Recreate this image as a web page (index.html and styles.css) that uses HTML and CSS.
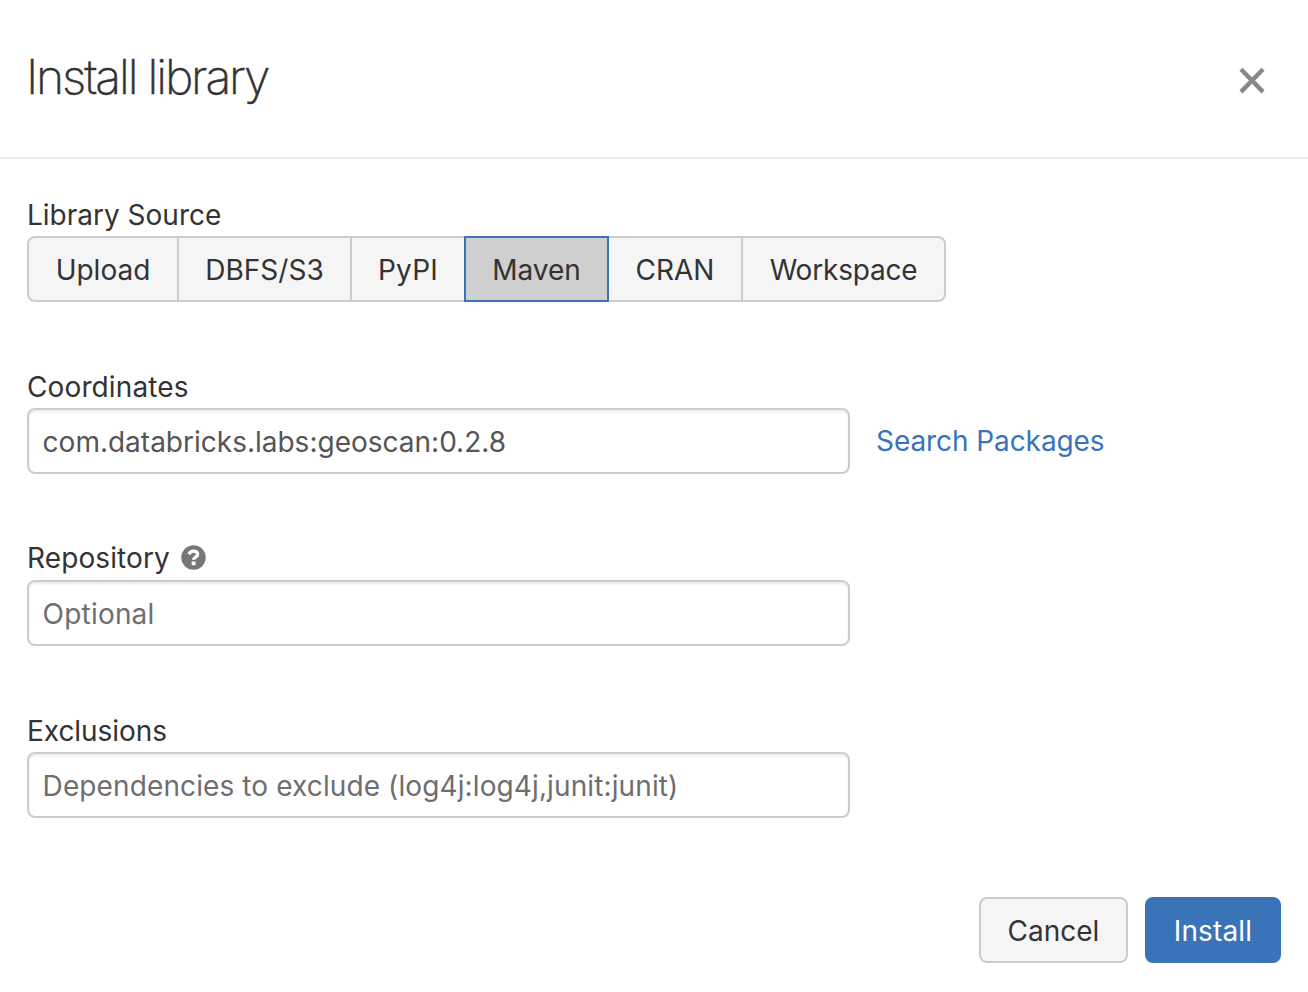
FILE: index.html
```html
<!DOCTYPE html>
<html lang="en">
<head>
<meta charset="utf-8">
<title>Install library</title>
<link rel="stylesheet" href="styles.css">
</head>
<body>
<main class="dialog">
  <header class="dialog-header">
    <h1 class="title">Install library</h1>
    <button class="close" aria-label="Close"><svg width="26" height="28" viewBox="0 0 26 28"><path d="M2 2.3 24 24.9M24 2.3 2 24.9" fill="none" stroke="#888" stroke-width="4.4"/></svg></button>
  </header>
  <section class="form">
    <div class="field">
      <div class="label source">Library Source</div>
      <div class="group">
        <button class="tab upload"><span>Upload</span></button>
        <button class="tab dbfs"><span>DBFS/S3</span></button>
        <button class="tab pypi"><span>PyPI</span></button>
        <button class="tab maven active"><span>Maven</span></button>
        <button class="tab cran"><span>CRAN</span></button>
        <button class="tab workspace"><span>Workspace</span></button>
      </div>
    </div>
    <div class="field">
      <div class="label coordinates">Coordinates</div>
      <div class="row">
        <div class="input value"><span>com.databricks.labs:geoscan:0.2.8</span></div>
        <a class="link">Search Packages</a>
      </div>
    </div>
    <div class="field">
      <div class="label repository">Repository
        <svg class="help" width="25" height="25" viewBox="0 0 25 25"><circle cx="12.5" cy="12.5" r="12.2" fill="#777"/><path d="M7.9 9.3C8.9 7.2 10.3 6.2 12.4 6.2c2.5 0 4.2 1.3 4.2 3.2 0 2.8-3.9 2.6-4 5.4" fill="none" stroke="#fff" stroke-width="3.3"/><path d="M10.7 16.5h3.8V20.2h-3.8z" fill="#fff"/></svg>
      </div>
      <div class="input optional"><span>Optional</span></div>
    </div>
    <div class="field">
      <div class="label exclusions">Exclusions</div>
      <div class="input exclude"><span>Dependencies to exclude (log4j:log4j,junit:junit)</span></div>
    </div>
  </section>
  <footer class="actions">
    <button class="btn cancel">Cancel</button>
    <button class="btn install">Install</button>
  </footer>
</main>
</body>
</html>
```
FILE: styles.css
```css
* { box-sizing: border-box; }
body { margin: 0; background: #fff; color: #333; font: 28px/34px Inter, "Liberation Sans", sans-serif; letter-spacing: 0; }
button { font: inherit; letter-spacing: inherit; color: inherit; padding: 2px 0 0; margin: 0; }
.dialog { width: 1308px; height: 992px; overflow: hidden; }
.dialog-header { height: 159px; border-bottom: 2px solid #eee; display: flex; justify-content: space-between; padding: 46px 43px 0 26px; }
.title { margin: 0; font-size: 48px; line-height: 62px; font-weight: 200; letter-spacing: -2.15px; -webkit-text-stroke: 0.5px #333; }
.close { width: 26px; height: 28px; border: 0; background: none; margin-top: 21px; padding: 0; }
.close svg { display: block; }
.form { padding: 39px 27px 0; display: flex; flex-direction: column; }
.field { height: 172px; }
.label { height: 38px; line-height: 34px; display: flex; align-items: flex-start; }
.coordinates { letter-spacing: 0.12px; }
.repository { line-height: 32px; letter-spacing: 0.1px; }
.exclusions { letter-spacing: -0.05px; }
.group { display: flex; }
.tab { height: 66px; border: 2px solid #ccc; background: #f5f5f5; margin-left: -2px; flex: none; }
.upload { width: 152px; margin-left: 0; border-radius: 8px 0 0 8px; }
.dbfs { width: 175px; }
.pypi { width: 116px; letter-spacing: 0.2px; }
.maven { width: 145px; }
.cran { width: 136px; }
.workspace { width: 205px; border-radius: 0 8px 8px 0; letter-spacing: -0.2px; }
.active { background: #cfcfcf; border-color: #3b73b9; position: relative; z-index: 1; }
.row { display: flex; align-items: center; gap: 26px; }
.input { width: 823px; height: 66px; flex: none; border: 2px solid #ccc; border-radius: 8px; padding: 2px 13.6px 0; display: flex; align-items: center; color: #6e6e6e; box-shadow: inset 0 2px 3px rgba(0,0,0,.08); white-space: nowrap; }
.value { color: #555; }
.optional { letter-spacing: 0.2px; }
.exclude { letter-spacing: 0.11px; }
.link { color: #3b73b9; letter-spacing: -0.08px; }
.help { margin: 3px 0 0 11.5px; }
.actions { display: flex; justify-content: flex-end; gap: 17px; padding: 11px 27px 0; }
.btn { height: 66px; border: 2px solid #ccc; border-radius: 8px; background: #f5f5f5; }
.cancel { width: 149px; }
.install { width: 136px; border-color: #3b73b9; background: #3b73b9; color: #fff; letter-spacing: 0.15px; }
```
